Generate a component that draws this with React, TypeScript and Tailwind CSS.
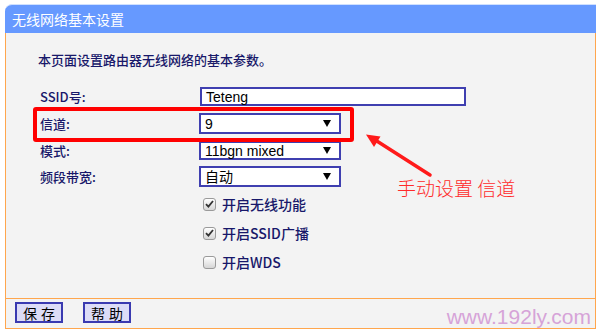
import React from "react";

function Arrow() {
  return (
    <svg width="8" height="7" viewBox="0 0 8 7" className="block">
      <polygon points="0,0 8,0 4,7" fill="#000" />
    </svg>
  );
}

function Select({ value }: { value: string }) {
  return (
    <div className="w-[142px] h-full bg-white border-2 border-[#3f3fb0] flex items-center pl-[4px] pr-[8px] font-['Liberation_Sans','Noto_Sans_CJK_SC',sans-serif] text-[14px] text-black leading-none">
      <span className="flex-1">{value}</span>
      <Arrow />
    </div>
  );
}

function Check({ checked, label }: { checked: boolean; label: string }) {
  return (
    <div className="h-[20px] flex items-center ml-[4px] gap-[6px]">
      <div className="w-[13px] h-[13px] rounded-[3px] border border-[#9a9a9a] bg-gradient-to-b from-[#ffffff] to-[#d6d6d6] flex items-center justify-center">
        {checked && (
          <svg width="9" height="8" viewBox="0 0 9 8">
            <path d="M1 4.2 L3.4 6.6 L8 1" stroke="#333" strokeWidth="1.8" fill="none" />
          </svg>
        )}
      </div>
      <span className="text-[14px] leading-none font-medium text-[#18186a]">{label}</span>
    </div>
  );
}

export default function App() {
  return (
    <div className="w-[600px] h-[333px] bg-white pt-[4px] pl-[5px] font-['Noto_Sans_CJK_SC','Liberation_Sans',sans-serif] overflow-hidden">
      <div className="w-[591px] flex flex-col">
        <div className="h-[29px] bg-[#6699ff] rounded-tl-[7px] border-t border-[#cfe0ff] flex items-center pl-[7px] text-[14px] text-white leading-none">
          无线网络基本设置
        </div>
        <div className="relative h-[265px] bg-[#f3f3f3] border-x border-[#ffa64d] flex flex-col">
          <div className="pt-[19px] pl-[32px] h-[35px] text-[13px] leading-[16px] font-medium text-[#18186a]">
            本页面设置路由器无线网络的基本参数。
          </div>
          <div className="pl-[34px] flex flex-col">
            <div className="mt-[19px] h-[19px] flex items-center">
              <span className="w-[160px] text-[13px] leading-none font-medium text-[#18186a]">SSID号:</span>
              <div className="w-[266px] h-full bg-white border-2 border-[#3f3fb0] flex items-center pl-[4px] font-['Liberation_Sans',sans-serif] text-[14px] text-black leading-none">
                Teteng
              </div>
            </div>
            <div className="mt-[7px] h-[21px] flex items-center">
              <span className="w-[159px] text-[13px] leading-none font-medium text-[#18186a]">信道:</span>
              <Select value="9" />
            </div>
            <div className="mt-[7px] h-[19px] flex items-center">
              <span className="w-[159px] text-[13px] leading-none font-medium text-[#18186a]">模式:</span>
              <Select value="11bgn mixed" />
            </div>
            <div className="mt-[6px] h-[21px] flex items-center">
              <span className="w-[159px] text-[13px] leading-none font-medium text-[#18186a]">频段带宽:</span>
              <Select value="自动" />
            </div>
            <div className="pl-[159px] mt-[7px] flex flex-col gap-[9px]">
              <Check checked label="开启无线功能" />
              <Check checked label="开启SSID广播" />
              <Check checked={false} label="开启WDS" />
            </div>
          </div>

          <div className="absolute left-[27px] top-[74px] w-[321px] h-[35px] border-[4px] border-[#ff0000] rounded-[3px]" />
          <svg className="absolute left-[355px] top-[95px]" width="80" height="55" viewBox="0 0 80 55">
            <line x1="69" y1="47" x2="15" y2="12.5" stroke="#ff1a1a" strokeWidth="3.5" strokeLinecap="round" />
            <polygon points="5,6.5 19.5,8.5 13,19" fill="#ff1a1a" />
          </svg>
          <div className="absolute left-[391px] top-[145px] text-[19px] leading-[20px] font-light text-[#ff2a2a] whitespace-nowrap">
            手动设置 信道
          </div>
        </div>
        <div className="h-[31px] border border-[#ffa64d] bg-[#f3f3f3] flex items-start pt-[3px] pl-[9px] pr-[4px]">
          <button className="w-[48px] h-[21px] bg-[#dcdcf7] border-2 border-[#3a3ab0] text-[14px] leading-none text-black tracking-[4px] pl-[4px]">
            保存
          </button>
          <button className="ml-[20px] w-[48px] h-[21px] bg-[#dcdcf7] border-2 border-[#3a3ab0] text-[14px] leading-none text-black tracking-[4px] pl-[4px]">
            帮助
          </button>
          <span className="ml-auto mt-[3px] font-['Liberation_Sans',sans-serif] text-[21px] leading-[24px] text-[#d6a3d8]">
            www.192ly.com
          </span>
        </div>
      </div>
    </div>
  );
}
